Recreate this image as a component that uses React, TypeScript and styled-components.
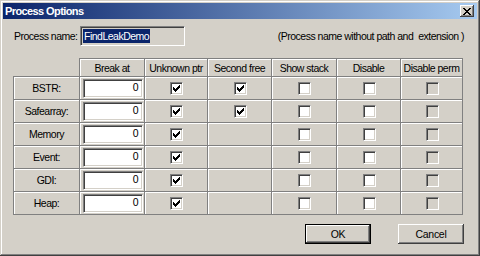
import React from "react";
import styled, { createGlobalStyle } from "styled-components";

const GlobalStyle = createGlobalStyle`
  html, body {
    margin: 0;
    padding: 0;
    background: #d4d0c8;
  }
  body {
    font-family: "Liberation Sans", Arial, sans-serif;
    font-size: 10.5px;
    letter-spacing: -0.5px;
    color: #000;
  }
`;

const Window = styled.div`
  width: 480px;
  height: 256px;
  box-sizing: border-box;
  padding: 3px;
  background: #d4d0c8;
  display: flex;
  flex-direction: column;
  box-shadow: inset -1px -1px 0 #404040, inset 1px 1px 0 #d4d0c8,
    inset -2px -2px 0 #808080, inset 2px 2px 0 #fff;
`;

const TitleBar = styled.div`
  height: 16px;
  display: flex;
  align-items: center;
  justify-content: space-between;
  padding: 0 3px 0 2px;
  background: linear-gradient(to right, #0a246a, #a6caf0);
`;

const TitleText = styled.span`
  color: #fff;
  font-weight: bold;
  font-size: 11px;
  letter-spacing: -0.6px;
`;

const CloseButton = styled.button`
  width: 14px;
  height: 12px;
  padding: 0;
  border: none;
  background: #d4d0c8;
  display: flex;
  align-items: center;
  justify-content: center;
  box-shadow: inset -1px -1px 0 #404040, inset 1px 1px 0 #fff,
    inset -2px -2px 0 #808080;
`;

const Content = styled.div`
  padding: 7px 13px 0 10px;
  display: flex;
  flex-direction: column;
`;

const NameRow = styled.div`
  height: 20px;
  display: flex;
  align-items: center;
`;

const NameLabel = styled.span`
  width: 67px;
  flex-shrink: 0;
  box-sizing: border-box;
  padding-left: 1px;
  white-space: nowrap;
`;

const NameField = styled.div`
  width: 105px;
  height: 20px;
  flex-shrink: 0;
  box-sizing: border-box;
  padding: 3px 2px;
  background: #d4d0c8;
  border-top: 1px solid #808080;
  border-left: 1px solid #808080;
  border-right: 1px solid #fff;
  border-bottom: 1px solid #fff;
  box-shadow: inset 1px 1px 0 #404040, inset -1px -1px 0 #d4d0c8;
  display: flex;
  align-items: center;
`;

const Selection = styled.span`
  background: #0a246a;
  color: #fff;
  line-height: 14px;
  padding: 0 1px;
  white-space: nowrap;
`;

const Hint = styled.span`
  margin-left: auto;
  white-space: pre;
`;

const Grid = styled.div`
  margin-top: 12px;
  display: grid;
  grid-template-columns: 67px 65px 63px 64px 65px 64px 62px;
  grid-template-rows: 19px repeat(6, 23px);
`;

const Corner = styled.div`
  box-sizing: border-box;
  border-right: 1px solid #808080;
  border-bottom: 1px solid #808080;
`;

const Cell = styled.div<{ $head?: boolean; $label?: boolean }>`
  box-sizing: border-box;
  display: flex;
  align-items: center;
  justify-content: center;
  border-right: 1px solid #808080;
  border-bottom: 1px solid #808080;
  border-top: ${(p) => (p.$head ? "1px solid #808080" : "none")};
  border-left: ${(p) => (p.$label ? "1px solid #808080" : "none")};
  box-shadow: inset 1px 1px 0 #fff;
  white-space: nowrap;
`;

const BreakField = styled.div`
  width: 60px;
  height: 19px;
  box-sizing: border-box;
  margin-left: 2px;
  padding-right: 4px;
  background: #fff;
  border-top: 1px solid #808080;
  border-left: 1px solid #808080;
  border-right: 1px solid #fff;
  border-bottom: 1px solid #fff;
  box-shadow: inset 1px 1px 0 #404040, inset -1px -1px 0 #d4d0c8;
  text-align: right;
  line-height: 15px;
`;

const CheckBox = styled.span<{ $disabled?: boolean }>`
  width: 13px;
  height: 13px;
  box-sizing: border-box;
  margin-left: 1px;
  display: flex;
  align-items: center;
  justify-content: center;
  background: ${(p) => (p.$disabled ? "#d4d0c8" : "#fff")};
  border-top: 1px solid #808080;
  border-left: 1px solid #808080;
  border-right: 1px solid #fff;
  border-bottom: 1px solid #fff;
  box-shadow: inset 1px 1px 0 #404040, inset -1px -1px 0 #d4d0c8;
`;

const ButtonRow = styled.div`
  margin-top: 9px;
  display: flex;
  justify-content: flex-end;
  gap: 27px;
`;

const Button = styled.button<{ $default?: boolean }>`
  width: 66px;
  height: 20px;
  padding: 0;
  box-sizing: border-box;
  font-family: "Liberation Sans", Arial, sans-serif;
  font-size: 10.5px;
  letter-spacing: -0.3px;
  color: #000;
  background: #d4d0c8;
  border: ${(p) => (p.$default ? "1px solid #000" : "none")};
  box-shadow: inset -1px -1px 0 #404040, inset 1px 1px 0 #fff,
    inset -2px -2px 0 #808080;
`;

const CHECK = [
  [6],
  [5, 6],
  [0, 4, 5, 6],
  [0, 1, 3, 4, 5],
  [0, 1, 2, 3, 4],
  [1, 2, 3],
  [2],
];

const CheckMark = () => (
  <svg width="7" height="7" viewBox="0 0 7 7" shapeRendering="crispEdges">
    {CHECK.map((xs, y) =>
      xs.map((x) => <rect key={`${x}-${y}`} x={x} y={y} width="1" height="1" fill="#000" />)
    )}
  </svg>
);

const CloseGlyph = () => (
  <svg width="8" height="7" viewBox="0 0 8 7" shapeRendering="crispEdges">
    {[0, 1, 2, 3, 4, 5, 6].map((i) => (
      <g key={i}>
        <rect x={i} y={i} width="2" height="1" fill="#000" />
        <rect x={6 - i} y={i} width="2" height="1" fill="#000" />
      </g>
    ))}
  </svg>
);

type Row = { name: string; unknown: boolean; second: boolean | null };

const rows: Row[] = [
  { name: "BSTR:", unknown: true, second: true },
  { name: "Safearray:", unknown: true, second: true },
  { name: "Memory", unknown: true, second: null },
  { name: "Event:", unknown: true, second: null },
  { name: "GDI:", unknown: true, second: null },
  { name: "Heap:", unknown: true, second: null },
];

const headers = ["Break at", "Unknown ptr", "Second free", "Show stack", "Disable", "Disable perm"];

const Box: React.FC<{ checked?: boolean; disabled?: boolean }> = ({ checked, disabled }) => (
  <CheckBox $disabled={disabled}>{checked && <CheckMark />}</CheckBox>
);

const App: React.FC = () => {
  return (
    <>
      <GlobalStyle />
      <Window>
        <TitleBar>
          <TitleText>Process Options</TitleText>
          <CloseButton>
            <CloseGlyph />
          </CloseButton>
        </TitleBar>
        <Content>
          <NameRow>
            <NameLabel>Process name:</NameLabel>
            <NameField>
              <Selection>FindLeakDemo</Selection>
            </NameField>
            <Hint>(Process name without path and  extension )</Hint>
          </NameRow>
          <Grid>
            <Corner />
            {headers.map((h) => (
              <Cell key={h} $head>
                {h}
              </Cell>
            ))}
            {rows.map((r) => (
              <React.Fragment key={r.name}>
                <Cell $label>{r.name}</Cell>
                <Cell>
                  <BreakField>0</BreakField>
                </Cell>
                <Cell>
                  <Box checked={r.unknown} />
                </Cell>
                <Cell>{r.second !== null && <Box checked={r.second} />}</Cell>
                <Cell>
                  <Box />
                </Cell>
                <Cell>
                  <Box />
                </Cell>
                <Cell>
                  <Box disabled />
                </Cell>
              </React.Fragment>
            ))}
          </Grid>
          <ButtonRow>
            <Button $default>OK</Button>
            <Button>Cancel</Button>
          </ButtonRow>
        </Content>
      </Window>
    </>
  );
};

export default App;
